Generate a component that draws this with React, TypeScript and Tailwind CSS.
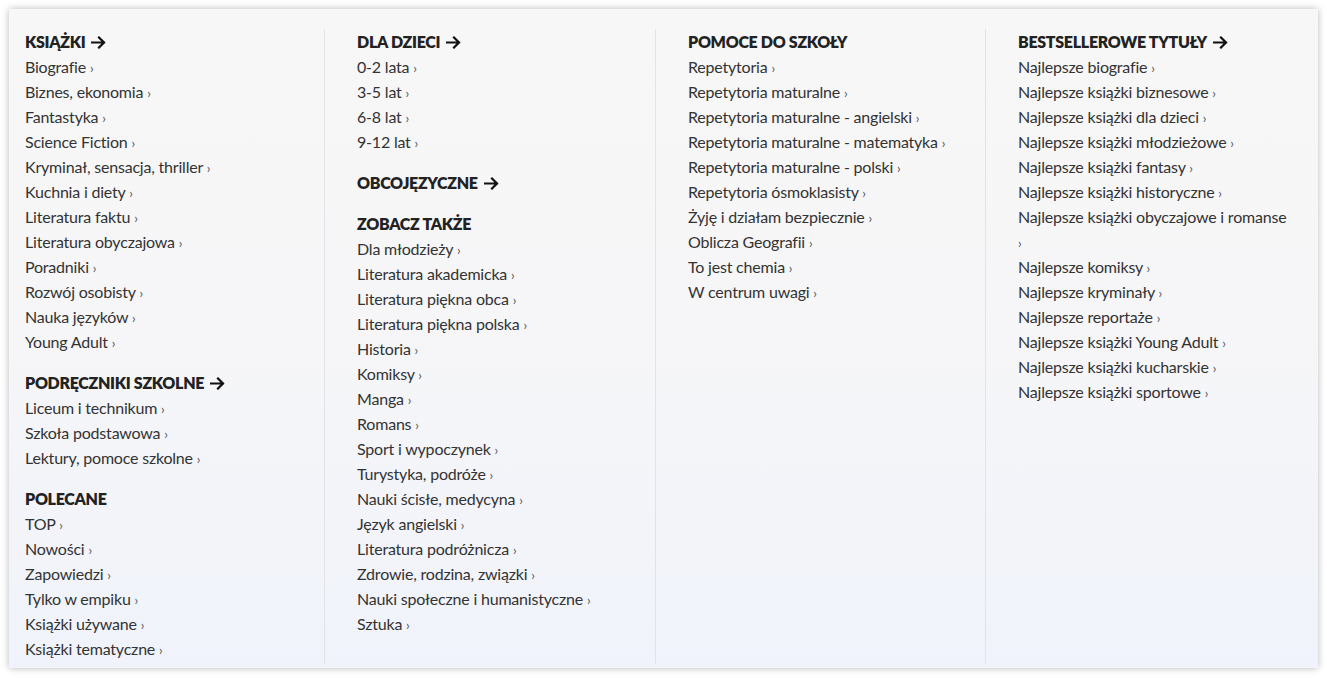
import React from "react";

type Group = { title: string; arrow?: boolean; items: string[] };

const columns: Group[][] = [
  [
    {
      title: "KSIĄŻKI",
      arrow: true,
      items: [
        "Biografie",
        "Biznes, ekonomia",
        "Fantastyka",
        "Science Fiction",
        "Kryminał, sensacja, thriller",
        "Kuchnia i diety",
        "Literatura faktu",
        "Literatura obyczajowa",
        "Poradniki",
        "Rozwój osobisty",
        "Nauka języków",
        "Young Adult",
      ],
    },
    {
      title: "PODRĘCZNIKI SZKOLNE",
      arrow: true,
      items: ["Liceum i technikum", "Szkoła podstawowa", "Lektury, pomoce szkolne"],
    },
    {
      title: "POLECANE",
      items: ["TOP", "Nowości", "Zapowiedzi", "Tylko w empiku", "Książki używane", "Książki tematyczne"],
    },
  ],
  [
    { title: "DLA DZIECI", arrow: true, items: ["0-2 lata", "3-5 lat", "6-8 lat", "9-12 lat"] },
    { title: "OBCOJĘZYCZNE", arrow: true, items: [] },
    {
      title: "ZOBACZ TAKŻE",
      items: [
        "Dla młodzieży",
        "Literatura akademicka",
        "Literatura piękna obca",
        "Literatura piękna polska",
        "Historia",
        "Komiksy",
        "Manga",
        "Romans",
        "Sport i wypoczynek",
        "Turystyka, podróże",
        "Nauki ścisłe, medycyna",
        "Język angielski",
        "Literatura podróżnicza",
        "Zdrowie, rodzina, związki",
        "Nauki społeczne i humanistyczne",
        "Sztuka",
      ],
    },
  ],
  [
    {
      title: "POMOCE DO SZKOŁY",
      items: [
        "Repetytoria",
        "Repetytoria maturalne",
        "Repetytoria maturalne - angielski",
        "Repetytoria maturalne - matematyka",
        "Repetytoria maturalne - polski",
        "Repetytoria ósmoklasisty",
        "Żyję i działam bezpiecznie",
        "Oblicza Geografii",
        "To jest chemia",
        "W centrum uwagi",
      ],
    },
  ],
  [
    {
      title: "BESTSELLEROWE TYTUŁY",
      arrow: true,
      items: [
        "Najlepsze biografie",
        "Najlepsze książki biznesowe",
        "Najlepsze książki dla dzieci",
        "Najlepsze książki młodzieżowe",
        "Najlepsze książki fantasy",
        "Najlepsze książki historyczne",
        "Najlepsze książki obyczajowe i romanse",
        "Najlepsze komiksy",
        "Najlepsze kryminały",
        "Najlepsze reportaże",
        "Najlepsze książki Young Adult",
        "Najlepsze książki kucharskie",
        "Najlepsze książki sportowe",
      ],
    },
  ],
];

function ArrowRight() {
  return (
    <svg width="15" height="13" viewBox="0 0 15 13" className="inline-block ml-[6px] -mt-[3px] align-middle" aria-hidden>
      <path d="M1 6.5h12M8 1.5l5 5-5 5" fill="none" stroke="#111" strokeWidth="2.2" strokeLinecap="square" />
    </svg>
  );
}

function Section({ group, first }: { group: Group; first: boolean }) {
  return (
    <div className={first ? "" : "mt-4"}>
      <div className="h-[25px] leading-[25px] text-[16px] font-extrabold tracking-[-0.3px] text-[#222]">
        {group.title}
        {group.arrow && <ArrowRight />}
      </div>
      <ul>
        {group.items.map((it) => (
          <li key={it} className="leading-[25px] text-[16px] text-[#333] tracking-[-0.2px]">
            {it} <span className="text-[13px] leading-none text-[#555]">›</span>
          </li>
        ))}
      </ul>
    </div>
  );
}

export default function App() {
  return (
    <div className="bg-white w-[1327px] h-[678px] pt-[9px] pl-[9px]" style={{ fontFamily: "Lato, 'Noto Sans', sans-serif" }}>
      <div className="w-[1309px] h-[659px] bg-gradient-to-b from-[#f7f7f7] via-[#f6f6f8] to-[#f0f3fb] shadow-[0_0_7px_rgba(0,0,0,0.28)] pl-4 pt-[20px] pb-[4px] flex">
        {columns.map((col, ci) => (
          <div
            key={ci}
            className={
              ci === 0
                ? "w-[299px] shrink-0"
                : ci === 1
                ? "w-[331px] shrink-0 border-l border-[#e2e3e6] pl-8"
                : ci === 3
                ? "w-[330px] shrink-0 border-l border-[#e2e3e6] pl-8 pr-[26px]"
                : "w-[330px] shrink-0 border-l border-[#e2e3e6] pl-8"
            }
          >
            {col.map((g, gi) => (
              <Section key={g.title} group={g} first={gi === 0} />
            ))}
          </div>
        ))}
      </div>
    </div>
  );
}
